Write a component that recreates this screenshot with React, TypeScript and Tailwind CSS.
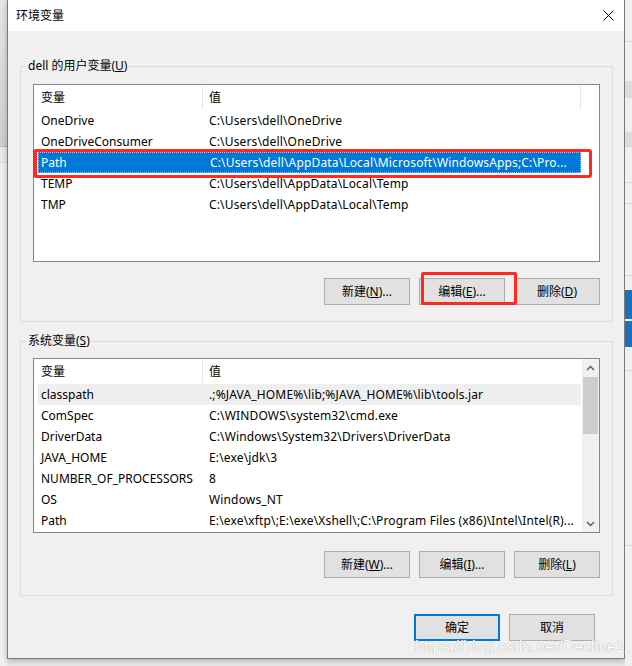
import type { ReactNode } from "react";

const ui = "font-['Noto_Sans','Noto_Sans_CJK_SC',sans-serif] text-[12px] leading-[16px] text-black";

interface Row {
  name: string;
  value: string;
}

const userVars: Row[] = [
  { name: "OneDrive", value: "C:\\Users\\dell\\OneDrive" },
  { name: "OneDriveConsumer", value: "C:\\Users\\dell\\OneDrive" },
  { name: "Path", value: "C:\\Users\\dell\\AppData\\Local\\Microsoft\\WindowsApps;C:\\Pro..." },
  { name: "TEMP", value: "C:\\Users\\dell\\AppData\\Local\\Temp" },
  { name: "TMP", value: "C:\\Users\\dell\\AppData\\Local\\Temp" },
];

const systemVars: Row[] = [
  { name: "classpath", value: ".;%JAVA_HOME%\\lib;%JAVA_HOME%\\lib\\tools.jar" },
  { name: "ComSpec", value: "C:\\WINDOWS\\system32\\cmd.exe" },
  { name: "DriverData", value: "C:\\Windows\\System32\\Drivers\\DriverData" },
  { name: "JAVA_HOME", value: "E:\\exe\\jdk\\3" },
  { name: "NUMBER_OF_PROCESSORS", value: "8" },
  { name: "OS", value: "Windows_NT" },
  { name: "Path", value: "E:\\exe\\xftp\\;E:\\exe\\Xshell\\;C:\\Program Files (x86)\\Intel\\Intel(R)..." },
];

function Key({ k }: { k: string }) {
  return <span className="underline underline-offset-[1px]">{k}</span>;
}

function Btn({ children, primary }: { children: ReactNode; primary?: boolean }) {
  return (
    <button
      className={
        primary
          ? "w-[86px] h-[27px] bg-[#e1e1e1] border-2 border-[#0078d7] flex items-center justify-center"
          : "w-[86px] h-[27px] bg-[#e1e1e1] border border-[#adadad] flex items-center justify-center"
      }
    >
      {children}
    </button>
  );
}

function Header({ endLine }: { endLine?: boolean }) {
  return (
    <div className="flex h-[25px] items-center shrink-0">
      <div className="w-[168px] pl-[7px]">变量</div>
      <div className="w-px h-[23px] bg-[#e5e5e5]" />
      <div className="w-[377px] pl-[6px]">值</div>
      {endLine && <div className="w-px h-[23px] bg-[#e5e5e5]" />}
    </div>
  );
}

function ListRow({ row, selected, hot }: { row: Row; selected?: boolean; hot?: boolean }) {
  let cls = "ml-[4px] w-[543px] h-[21px] flex items-center whitespace-nowrap overflow-hidden";
  if (selected) cls += " bg-[#0078d7] text-white border border-dotted border-[#9ccaf0]";
  if (hot) cls += " bg-[#efefef]";
  return (
    <div className={cls}>
      <div className={selected ? "w-[164px] pl-[2px]" : "w-[164px] pl-[3px]"}>{row.name}</div>
      <div className="pl-[7px] tracking-[0.15px]">{row.value}</div>
    </div>
  );
}

function Chevron({ up }: { up?: boolean }) {
  return (
    <svg width="9" height="6" viewBox="0 0 9 6">
      <polyline
        points={up ? "1,5 4.5,1.5 8,5" : "1,1 4.5,4.5 8,1"}
        fill="none"
        stroke="#606060"
        strokeWidth="1.5"
      />
    </svg>
  );
}

function GroupBox({ label, children, className }: { label: ReactNode; children: ReactNode; className?: string }) {
  return (
    <fieldset className={"border border-[#dcdcdc] " + (className ?? "")}>
      <legend className="ml-[6px] px-[1px] leading-[16px]">{label}</legend>
      {children}
    </fieldset>
  );
}

export default function App() {
  return (
    <div className={`relative w-[632px] h-[666px] flex bg-[#e9e9e9] overflow-hidden ${ui}`}>
      {/* left backdrop */}
      <div className="w-[7px] flex flex-col">
        <div className="h-[147px] bg-gradient-to-b from-[#e6e6e6] to-[#cfcfcf] border-b border-[#bdbdbd]" />
        <div className="h-[16px] border-b border-[#d8d8d8]" />
        <div className="flex-1 bg-[#f0f0f0]" />
      </div>

      {/* dialog */}
      <div className="w-[618px] h-[659px] flex flex-col border-x border-b border-[#7a7a7a] bg-[#f0f0f0] shadow-[0_2px_6px_rgba(0,0,0,0.25)]">
        <div className="h-[31px] bg-white flex items-center justify-between pl-[8px] pr-[10px] shrink-0">
          <span>环境变量</span>
          <svg width="11" height="11" viewBox="0 0 11 11">
            <path d="M0.5 0.5 L10.5 10.5 M10.5 0.5 L0.5 10.5" stroke="#000" strokeWidth="1" />
          </svg>
        </div>

        <div className="flex flex-col pt-[27px] pl-[12px] pr-[11px] pb-[17px]">
          <GroupBox
            label={
              <>
                dell 的用户变量(<Key k="U" />)
              </>
            }
          >
            <div className="pl-[12px] pr-[12px] pt-[10px] pb-[16px] flex flex-col">
              <div className="h-[178px] border border-[#828790] bg-white flex flex-col">
                <Header endLine />
                {userVars.map((r) => (
                  <ListRow key={r.name} row={r} selected={r.name === "Path"} />
                ))}
              </div>
              <div className="mt-[16px] flex justify-end gap-[9px]">
                <Btn>
                  新建(<Key k="N" />)...
                </Btn>
                <Btn>
                  编辑(<Key k="E" />)...
                </Btn>
                <Btn>
                  删除(<Key k="D" />)
                </Btn>
              </div>
            </div>
          </GroupBox>

          <GroupBox
            className="mt-[11px]"
            label={
              <>
                系统变量(<Key k="S" />)
              </>
            }
          >
            <div className="pl-[12px] pr-[12px] pt-[9px] pb-[17px] flex flex-col">
              <div className="h-[175px] border border-[#828790] bg-white flex">
                <div className="flex-1 flex flex-col overflow-hidden">
                  <Header />
                  {systemVars.map((r) => (
                    <ListRow key={r.name} row={r} hot={r.name === "classpath"} />
                  ))}
                </div>
                <div className="w-[17px] bg-[#f0f0f0] flex flex-col items-center">
                  <div className="h-[17px] flex items-center justify-center">
                    <Chevron up />
                  </div>
                  <div className="w-[15px] h-[57px] mt-px bg-[#cdcdcd]" />
                  <div className="flex-1" />
                  <div className="h-[17px] flex items-center justify-center">
                    <Chevron />
                  </div>
                </div>
              </div>
              <div className="mt-[18px] flex justify-end gap-[9px]">
                <Btn>
                  新建(<Key k="W" />)...
                </Btn>
                <Btn>
                  编辑(<Key k="I" />)...
                </Btn>
                <Btn>
                  删除(<Key k="L" />)
                </Btn>
              </div>
            </div>
          </GroupBox>

          <div className="mt-[18px] mr-[18px] flex justify-end gap-[9px]">
            <Btn primary>确定</Btn>
            <Btn>取消</Btn>
          </div>
        </div>
      </div>

      {/* right backdrop */}
      <div className="w-[7px] flex flex-col bg-[#f0f0f0]">
        <div className="h-[42px] border-b border-[#d6d6d6]" />
        <div className="h-[40px] border-b border-[#dcdcdc]" />
        <div className="h-[16px] bg-[#dcdcdc]" />
        <div className="h-[34px]" />
        <div className="h-[15px] bg-[#dcdcdc]" />
        <div className="h-[36px] border-b border-[#d6d6d6]" />
        <div className="h-[21px] border-b border-[#d6d6d6]" />
        <div className="h-[72px] border-b border-[#d6d6d6]" />
        <div className="h-[14px]" />
        <div className="h-[29px] bg-[#1c6fb9]" />
        <div className="h-[2px]" />
        <div className="h-[26px] bg-[#1c6fb9]" />
        <div className="h-[24px] border-b border-[#d6d6d6]" />
        <div className="h-[175px] border-b border-[#d6d6d6]" />
        <div className="flex-1" />
      </div>

      {/* annotations */}
      <div className="absolute left-[33px] top-[149px] w-[559px] h-[29px] border-[3px] border-l-4 border-[#ff2a1f] rounded-[3px]" />
      <div className="absolute left-[421px] top-[272px] w-[96px] h-[33px] border-[3px] border-[#ff2a1f] rounded-[2px]" />
      <div className="absolute left-[415px] top-[638px] font-['Liberation_Sans',sans-serif] text-[16px] leading-[18px] text-white [text-shadow:0_0_1px_#8a8a8a]">
        https://blog.csdn.net/Decline1
      </div>
    </div>
  );
}
